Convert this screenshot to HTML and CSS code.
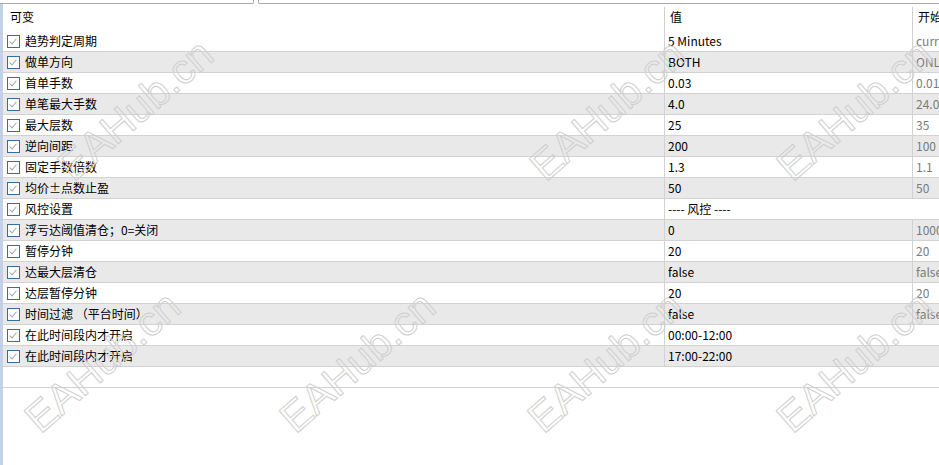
FILE: index.html
```html
<!DOCTYPE html>
<html lang="zh-CN">
<head>
<meta charset="utf-8">
<title>参数</title>
<link rel="stylesheet" href="styles.css">
</head>
<body>
<div class="page">
  <div class="tabs">
    <div class="tab tab-left"></div>
    <div class="tab tab-right"></div>
  </div>
  <div class="frame">
    <div class="strip"></div>
    <div class="table">
      <div class="head">
        <div class="hc c1">可变</div>
        <div class="hc c2">值</div>
        <div class="hc c3">开始</div>
      </div>
      <div class="row"><div class="cell c1"><span class="cb"></span>趋势判定周期</div><div class="cell c2">5 Minutes</div><div class="cell c3">current</div></div>
      <div class="row alt"><div class="cell c1"><span class="cb"></span>做单方向</div><div class="cell c2">BOTH</div><div class="cell c3">ONLY_BUY</div></div>
      <div class="row"><div class="cell c1"><span class="cb"></span>首单手数</div><div class="cell c2">0.03</div><div class="cell c3">0.01</div></div>
      <div class="row alt"><div class="cell c1"><span class="cb"></span>单笔最大手数</div><div class="cell c2">4.0</div><div class="cell c3">24.0</div></div>
      <div class="row"><div class="cell c1"><span class="cb"></span>最大层数</div><div class="cell c2">25</div><div class="cell c3">35</div></div>
      <div class="row alt"><div class="cell c1"><span class="cb"></span>逆向间距</div><div class="cell c2">200</div><div class="cell c3">100</div></div>
      <div class="row"><div class="cell c1"><span class="cb"></span>固定手数倍数</div><div class="cell c2">1.3</div><div class="cell c3">1.1</div></div>
      <div class="row alt"><div class="cell c1"><span class="cb"></span>均价±点数止盈</div><div class="cell c2">50</div><div class="cell c3">50</div></div>
      <div class="row"><div class="cell c1"><span class="cb"></span>风控设置</div><div class="cell c2 span">---- 风控 ----</div></div>
      <div class="row alt"><div class="cell c1"><span class="cb"></span>浮亏达阈值清仓；0=关闭</div><div class="cell c2">0</div><div class="cell c3">1000</div></div>
      <div class="row"><div class="cell c1"><span class="cb"></span>暂停分钟</div><div class="cell c2">20</div><div class="cell c3">20</div></div>
      <div class="row alt"><div class="cell c1"><span class="cb"></span>达最大层清仓</div><div class="cell c2">false</div><div class="cell c3">false</div></div>
      <div class="row"><div class="cell c1"><span class="cb"></span>达层暂停分钟</div><div class="cell c2">20</div><div class="cell c3">20</div></div>
      <div class="row alt"><div class="cell c1"><span class="cb"></span>时间过滤 （平台时间）</div><div class="cell c2">false</div><div class="cell c3">false</div></div>
      <div class="row"><div class="cell c1"><span class="cb"></span>在此时间段内才开启</div><div class="cell c2 span">00:00-12:00</div></div>
      <div class="row alt"><div class="cell c1"><span class="cb"></span>在此时间段内才开启</div><div class="cell c2 span">17:00-22:00</div></div>
      <div class="row blank"></div>
    </div>
  </div>
  <div class="marks">
    <span class="wm wm1">EAHub.cn</span>
    <span class="wm wm2">EAHub.cn</span>
    <span class="wm wm3">EAHub.cn</span>
    <span class="wm wm4">EAHub.cn</span>
    <span class="wm wm5">EAHub.cn</span>
    <span class="wm wm6">EAHub.cn</span>
    <span class="wm wm7">EAHub.cn</span>
  </div>
</div>
</body>
</html>
```

FILE: styles.css
```css
* { box-sizing: border-box; }
html, body { margin: 0; padding: 0; background: #fff; }
body {
  font-family: "Noto Sans CJK SC", "Noto Sans", sans-serif;
  font-size: 12px;
  color: #000;
}
.page {
  position: relative;
  width: 939px;
  height: 465px;
  overflow: hidden;
}
.tabs {
  display: flex;
  height: 4px;
}
.tab {
  height: 4px;
  border-bottom: 1px solid #a9a9a9;
}
.tab-left {
  width: 254px;
  border-right: 1px solid #a9a9a9;
  border-bottom-right-radius: 2px;
}
.tab-right {
  flex: 1;
  margin-left: 4px;
  border-left: 1px solid #a9a9a9;
  border-bottom-left-radius: 2px;
}
.frame {
  display: flex;
  height: 461px;
}
.strip {
  width: 3px;
  background: #c3d1e6;
}
.table {
  flex: 1;
  display: flex;
  flex-direction: column;
}
.head {
  display: grid;
  grid-template-columns: 661px 248px 1fr;
  height: 27px;
  padding-top: 3px;
}
.hc {
  line-height: 20px;
  white-space: nowrap;
  overflow: hidden;
}
.head .c1 { padding-left: 7px; }
.head .c2 { border-left: 1px solid #cfcfcf; padding-left: 5px; }
.head .c3 { border-left: 1px solid #cfcfcf; padding-left: 5px; }
.row {
  display: grid;
  grid-template-columns: 661px 248px 1fr;
  height: 21px;
  border-bottom: 1px solid #d2d2d2;
  background: #fff;
}
.row.alt { background: #e9e9e9; }
.cell {
  line-height: 20px;
  white-space: nowrap;
  overflow: hidden;
}
.cell.c1 {
  display: flex;
  align-items: center;
  gap: 5px;
  padding-left: 4px;
}
.cell.c2 {
  border-left: 1px solid #d2d2d2;
  padding-left: 3px;
}
.cell.c2.span { grid-column: 2 / 4; }
.cell.c3 {
  border-left: 1px solid #d2d2d2;
  padding-left: 3px;
  color: #7b7b7b;
}
.cb {
  flex: none;
  width: 13px;
  height: 13px;
  border: 1px solid #3a6aa2;
  background: #fff;
  position: relative;
}
.cb::after {
  content: "";
  position: absolute;
  left: 3px;
  top: 1px;
  width: 3px;
  height: 6px;
  border-right: 1px solid #a6a6a6;
  border-bottom: 1px solid #a6a6a6;
  transform: rotate(40deg);
}
.marks {
  position: absolute;
  inset: 0;
  pointer-events: none;
}
.wm {
  position: absolute;
  font-family: "Liberation Sans", "DejaVu Sans", sans-serif;
  font-size: 42px;
  line-height: 42px;
  color: transparent;
  -webkit-text-stroke: 1px #cfcfcf;
  white-space: nowrap;
  transform: rotate(-41deg);
  transform-origin: 0 100%;
}
.wm1 { left: 78px; top: 146px; }
.wm2 { left: 550px; top: 146px; }
.wm3 { left: 797px; top: 146px; }
.wm4 { left: 45px; top: 398px; }
.wm5 { left: 300px; top: 398px; }
.wm6 { left: 548px; top: 398px; }
.wm7 { left: 797px; top: 398px; }
```
